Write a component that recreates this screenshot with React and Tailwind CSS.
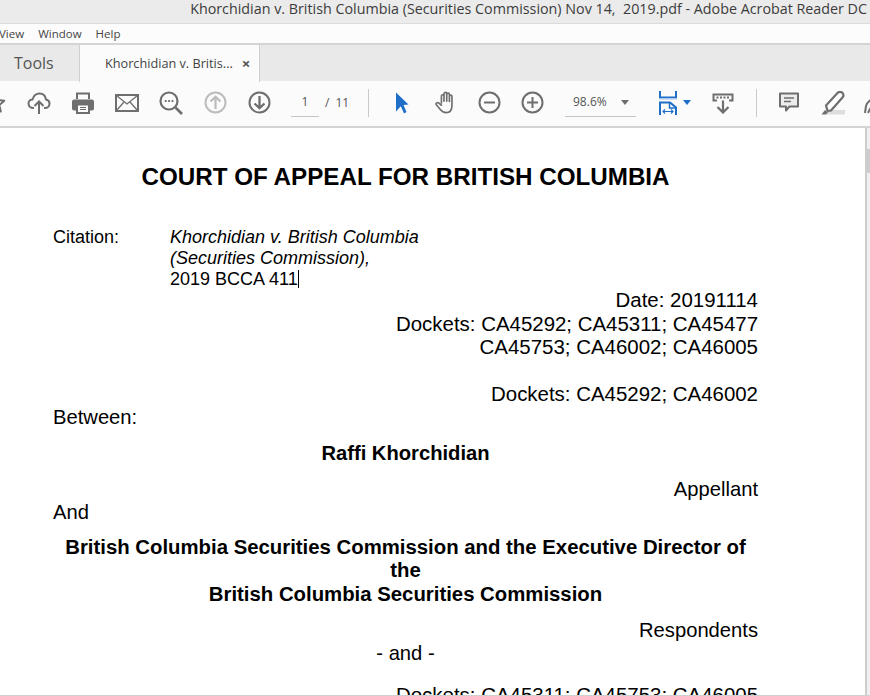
import React from "react";

const gray = "#6e6e6e";

function Slot({ w = "w-[44px]", children }) {
    return <div className={`${w} shrink-0 flex items-center justify-center`}>{children}</div>;
}

function Star() {
    return (
        <svg width="22" height="22" viewBox="0 0 22 22" fill="none" stroke={gray} strokeWidth="2" strokeLinejoin="round">
            <path d="M11 2l2.7 6.1 6.6.6-5 4.4 1.5 6.5L11 16.200l-5.800 3.400 1.500-6.500-5-4.400 6.600-.6z" />
        </svg>
    );
}

function Upload() {
    return (
        <svg width="24" height="24" viewBox="0 0 24 24" fill="none" stroke={gray} strokeWidth="2">
            <path d="M7 17H6.500C3.500 17 1.500 15 1.500 12.500C1.500 10 3.500 8.500 5.500 8.500C6.500 5 9 2.500 12.500 2.500C16 2.500 18.500 5 19 8.500C21 9 22.500 10.500 22.500 12.500C22.500 15 20.500 17 18 17H17" />
            <path d="M12 23V11M7.500 15L12 10.500L16.500 15" />
        </svg>
    );
}

function Printer() {
    return (
        <svg width="24" height="24" viewBox="0 0 24 24" fill={gray}>
            <path fillRule="evenodd" d="M5 1.500h14v6.500h-2V3.500H7V8H5zM3 8.500h18c1 0 2 1 2 2v7c0 1-1 2-2 2h-2v3.500H5v-3.500H3c-1 0-2-1-2-2v-7c0-1 1-2 2-2zM7 14.500v6.500h10v-6.500z" />
            <rect x="9" y="16" width="6" height="1" />
            <rect x="9" y="18" width="6" height="1" />
        </svg>
    );
}

function Mail() {
    return (
        <svg width="24" height="18" viewBox="0 0 24 18" fill="none" stroke={gray} strokeWidth="2">
            <rect x="1" y="1" width="22" height="16" />
            <path strokeWidth="1.300" d="M1.500 1.500L12 10L22.500 1.500M1.500 16.500L9 8M22.500 16.500L15 8" />
        </svg>
    );
}

function Search() {
    return (
        <svg width="24" height="24" viewBox="0 0 24 24" fill="none" stroke={gray} strokeWidth="2.200">
            <circle cx="10" cy="10" r="8.500" />
            <path strokeWidth="2.600" d="M16.500 16.500L23 23" />
            <path strokeWidth="1.800" strokeDasharray="1.800 1.600" d="M5.800 10H14.500" />
        </svg>
    );
}

function CircleArrow({ up, color = gray }) {
    return (
        <svg width="23" height="23" viewBox="0 0 23 23" fill="none" stroke={color} strokeWidth="2">
            <circle cx="11.500" cy="11.500" r="10" />
            {up
                ? <path strokeWidth="2.300" d="M11.500 18V6M6.500 10.500L11.500 5.800L16.500 10.500" />
                : <path strokeWidth="2.300" d="M11.500 5V17M6.500 12.500L11.500 17.200L16.500 12.500" />}
        </svg>
    );
}

function Cursor() {
    return (
        <svg width="14" height="22" viewBox="0 0 14 22" fill="#1f6fc9">
            <path d="M1 0.500L13.500 12.500L8.500 13L11.500 20L9 21.500L5.800 14.200L1 19.500z" />
        </svg>
    );
}

function Hand() {
    return (
        <svg width="24" height="25" viewBox="0 0 24 25" fill="none" stroke={gray} strokeWidth="1.800" strokeLinecap="round" strokeLinejoin="round">
            <path d="M7 13V5.500C7 3.500 9.800 3.500 9.800 5.500V11V3C9.800 1 12.800 1 12.800 3V11V3.800C12.800 1.800 15.700 1.800 15.700 3.800V11.500V6C15.700 4 18.500 4 18.500 6V16C18.500 21 16 23.500 12 23.500C9 23.500 7.500 22.500 6 20.500L1.500 15C0.500 13.500 2.500 11.800 4 13L7 15.500" />
        </svg>
    );
}

function CirclePm({ plus }) {
    return (
        <svg width="23" height="23" viewBox="0 0 23 23" fill="none" stroke={gray} strokeWidth="2">
            <circle cx="11.500" cy="11.500" r="10" />
            <path d="M6 11.500H17" />
            {plus && <path d="M11.500 6V17" />}
        </svg>
    );
}

function FitWidth() {
    return (
        <svg width="18" height="24" viewBox="0 0 18 24" fill="none" stroke="#1f6fc9" strokeWidth="2">
            <path d="M1 0V6.500H17V0" />
            <rect x="0" y="7.500" width="18" height="1.500" fill="#cfe0f2" stroke="none" />
            <path d="M1 24V11.500H11L17 16.500V24" />
            <path d="M10.500 11.500V17H17" strokeWidth="1.500" />
            <path strokeWidth="1.200" d="M4 20.500H14M6 18.500L4 20.500L6 22.500M12 18.500L14 20.500L12 22.500" />
        </svg>
    );
}

function ReadTool() {
    return (
        <svg width="22" height="21" viewBox="0 0 22 21" fill="none" stroke={gray} strokeWidth="2">
            <path d="M5 7.500H1.500V1.500H20.500V7.500H17" />
            <path strokeDasharray="2 1.500" d="M4.500 4.500H18" />
            <path strokeWidth="2.200" d="M11 7.500V19.500M5.500 14L11 19.500L16.500 14" />
        </svg>
    );
}

function Comment() {
    return (
        <svg width="20" height="21" viewBox="0 0 20 21" fill="none" stroke={gray} strokeWidth="2">
            <path fill="#ececec" strokeLinejoin="round" d="M1 1.500H19V14.500H10.500L7 18.500V14.500H1z" />
            <path strokeWidth="1.300" d="M5 6H15M5 9.500H12" />
        </svg>
    );
}

function Highlighter() {
    return (
        <svg width="24" height="24" viewBox="0 0 24 24" fill="none">
            <rect x="5" y="19" width="19" height="4.500" fill="#dddddd" />
            <path fill={gray} d="M0.500 23.500L4 19L7 21.500L5 23.500z" />
            <path stroke={gray} strokeWidth="2.200" fill="#ffffff" strokeLinejoin="round" d="M5 14.500L16.500 2C18 .5 20 .5 21.500 2C22.800 3.500 22.800 5 21.500 6.500L10 19.500L6.500 19.800z" />
        </svg>
    );
}

function Sign() {
    return (
        <svg width="22" height="24" viewBox="0 0 22 24" fill="none" stroke={gray} strokeWidth="2">
            <path d="M1 22L2 15C3 11 8 7 10 9C12 11 8 15 6 18L4 22" />
        </svg>
    );
}

function Separator() {
    return <div className="w-px h-[28px] bg-[#c9c9c9] shrink-0"></div>;
}

function Toolbar() {
    return (
        <div className="h-[47px] shrink-0 bg-[#fbfbfb] border-b-2 border-[#d4d4d4] flex items-center -mt-px pb-[2px] font-['Open_Sans',sans-serif] text-[12px] text-[#555555]">
            <div className="-ml-[27px] flex items-center">
                <Slot><Star /></Slot>
                <Slot><Upload /></Slot>
                <Slot><Printer /></Slot>
                <Slot><Mail /></Slot>
                <Slot><Search /></Slot>
                <Slot><CircleArrow up color="#bdbdbd" /></Slot>
                <Slot><CircleArrow /></Slot>
            </div>
            <div className="ml-[10px] w-[28px] h-[28px] shrink-0 border-b border-[#c4c4c4] flex items-center justify-center">1</div>
            <div className="ml-[6px] w-[24px] shrink-0 whitespace-nowrap">/<span className="ml-[6px]">11</span></div>
            <div className="ml-[19px]"><Separator /></div>
            <Slot w="w-[66px]"><Cursor /></Slot>
            <Slot w="w-[22px]"><Hand /></Slot>
            <Slot w="w-[64px]"><CirclePm /></Slot>
            <Slot w="w-[23px]"><CirclePm plus /></Slot>
            <div className="ml-[21px] w-[71px] h-[28px] shrink-0 border-b border-[#c4c4c4] flex items-center justify-between pl-[8px] pr-[7px]">
                <span>98.6%</span>
                <span className="w-0 h-0 border-x-[4px] border-x-transparent border-t-[5px] border-t-[#6e6e6e]"></span>
            </div>
            <div className="ml-[23px] shrink-0"><FitWidth /></div>
            <span className="ml-[6px] shrink-0 w-0 h-0 border-x-[4px] border-x-transparent border-t-[5px] border-t-[#1f6fc9]"></span>
            <div className="ml-[21px] shrink-0 mt-[2px]"><ReadTool /></div>
            <div className="ml-[22px]"><Separator /></div>
            <div className="ml-[22px] shrink-0"><Comment /></div>
            <div className="ml-[22px] shrink-0"><Highlighter /></div>
            <div className="ml-[19px] shrink-0"><Sign /></div>
        </div>
    );
}

function Document() {
    return (
        <div className="flex-1 min-h-0 flex overflow-hidden border-b border-[#cfcfcf]">
            <div className="w-[865px] shrink-0 bg-white text-black pl-[53px] font-['Liberation_Sans',sans-serif] text-[20.200px] leading-[23.500px]">
                <div className="w-[705px]">
                    <div className="mt-[34px] text-center font-bold text-[24.200px] leading-[30px]">COURT OF APPEAL FOR BRITISH COLUMBIA</div>
                    <div className="mt-[35px] flex leading-[21px] text-[18px]">
                        <div className="w-[117px]">Citation:</div>
                        <div>
                            <div className="italic">Khorchidian v. British Columbia</div>
                            <div className="italic">(Securities Commission),</div>
                            <div className="relative">2019 BCCA 411<span className="inline-block w-px h-[18px] bg-black align-[-3px]"></span></div>
                        </div>
                    </div>
                    <div className="mt-[-2px] text-right text-[20.450px]">
                        <div>Date: 20191114</div>
                        <div>Dockets: CA45292; CA45311; CA45477</div>
                        <div>CA45753; CA46002; CA46005</div>
                        <div className="mt-[23.500px]">Dockets: CA45292; CA46002</div>
                    </div>
                    <div>Between:</div>
                    <div className="mt-[13px] text-center font-bold">Raffi Khorchidian</div>
                    <div className="mt-[12px] text-right">Appellant</div>
                    <div>And</div>
                    <div className="mt-[11px] text-center font-bold text-[20.350px]">
                        <div>British Columbia Securities Commission and the Executive Director of</div>
                        <div>the</div>
                        <div>British Columbia Securities Commission</div>
                    </div>
                    <div className="mt-[13px] text-right">Respondents</div>
                    <div className="-mt-px text-center">- and -</div>
                    <div className="mt-[18px] text-right text-[20.450px] whitespace-nowrap">Dockets: CA45311; CA45753; CA46005</div>
                </div>
            </div>
            <div className="flex-1 bg-[#f0f0f0] border-l-2 border-[#cdcdcd]">
                <div className="mt-[21px] h-[24px] bg-[#cdcdcd]"></div>
            </div>
        </div>
    );
}

export default function App() {
    return (
        <div className="w-[870px] h-[696px] overflow-hidden flex flex-col bg-white">
            <div className="h-[24px] shrink-0 bg-[#ebebeb] border-b border-[#dcdcdc] flex items-start leading-[17px] justify-end pr-[3px] font-['Open_Sans',sans-serif] text-[14.300px] text-[#3c3c3c] whitespace-pre">
                Khorchidian v. British Columbia (Securities Commission) Nov 14,  2019.pdf - Adobe Acrobat Reader DC
            </div>
            <div className="h-[21px] shrink-0 bg-[#fcfcfc] border-b-2 border-[#d4d4d4] flex items-center gap-[14px] -ml-px font-['Open_Sans',sans-serif] text-[11.500px] text-[#444444]">
                <span>View</span>
                <span>Window</span>
                <span>Help</span>
            </div>
            <div className="h-[37px] shrink-0 bg-[#e9e9e9] border-b border-[#cfcfcf] flex font-['Open_Sans',sans-serif]">
                <div className="w-[79px] pl-[14px] flex items-center text-[16px] text-[#555555]">Tools</div>
                <div className="relative w-[181px] h-[37px] bg-[#fbfbfb] border-x border-[#cfcfcf] pl-[25px] flex items-center gap-[9px] text-[12.700px] text-[#444444] whitespace-nowrap">
                    <span>Khorchidian v. Britis...</span>
                    <span className="text-[15px] font-bold text-[#555555]">×</span>
                </div>
            </div>
            <Toolbar />
            <Document />
        </div>
    );
}
